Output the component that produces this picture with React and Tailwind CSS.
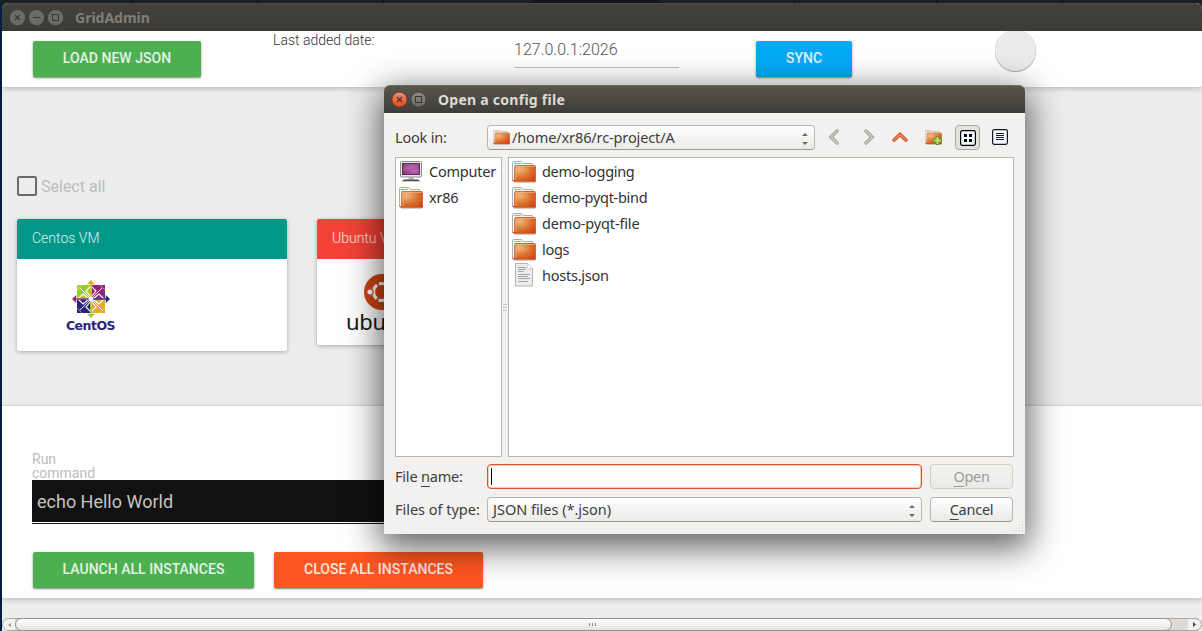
import React from "react";

const MaterialButton = ({ className, children }) => (
  <button
    className={`h-9 rounded-[2px] pb-[2px] text-center font-['Roboto'] text-[14px] font-medium tracking-[0.02px] text-white/85 shadow-[0_1px_3px_rgba(0,0,0,0.3),0_1px_1px_rgba(0,0,0,0.25)] ${className}`}
  >
    {children}
  </button>
);

const Folder = ({ small }) => (
  <svg
    viewBox="0 0 24 22"
    className={small ? "h-[15px] w-[17px] shrink-0" : "h-[22px] w-6 shrink-0"}
    preserveAspectRatio="none"
  >
    <defs>
      <radialGradient id="folderFill" cx="0.3" cy="0.25" r="0.95">
        <stop offset="0" stopColor="#f0b87c" />
        <stop offset="0.5" stopColor="#de7632" />
        <stop offset="1" stopColor="#d03c0c" />
      </radialGradient>
    </defs>
    <path d="M.5 20V1.500Q.5.5 1.500.5H9.500L11 2.500H20.500V19" fill="#f6f5f4" stroke="#b3b0ac" />
    <path d="M2 2.500h7" stroke="#eb9a66" />
    <path d="M12 4.500h8" stroke="#d8a080" />
    <path d="M3 4.500H22.500Q23.500 4.500 23.500 5.500V20.500H3L1 20Z" fill="url(#folderFill)" stroke="#c65a28" strokeWidth=".8" />
    <path d="M4 19V5.500H23" fill="none" stroke="#f1b488" strokeWidth=".7" />
    <path d="M1.500 3v16" stroke="#fff" />
    <path d="M2 21.300h21" stroke="#b8b0aa" strokeWidth=".8" />
  </svg>
);

const Computer = () => (
  <svg viewBox="0 0 24 22" className="h-[22px] w-6 shrink-0">
    <defs>
      <radialGradient id="screenFill" cx="0.65" cy="0.65" r="0.8">
        <stop offset="0" stopColor="#c967b8" />
        <stop offset="1" stopColor="#76256f" />
      </radialGradient>
    </defs>
    <rect x="1.500" y=".5" width="21" height="15.500" rx="1" fill="#e8e8e6" stroke="#8c8c88" />
    <rect x="3.500" y="2.500" width="17" height="11" fill="url(#screenFill)" stroke="#55304f" />
    <path d="M4 3h16v2L4 10z" fill="#fff" opacity=".15" />
    <path d="M9.500 16.500h5v2h-5z" fill="#aaa" />
    <path d="M5 18.500h14l2 1.500H3z" fill="#4a4a48" />
    <path d="M2.500 20.500h19" stroke="#ccc" />
  </svg>
);

const FileIcon = () => (
  <svg viewBox="0 0 24 24" className="mb-[2px] h-6 w-6 shrink-0">
    <path d="M3.500.5h12l5 5v17.500h-17z" fill="#ececea" stroke="#b2b2b0" />
    <path d="M15.500.5v5h5z" fill="#fff" stroke="#c8c8c6" strokeWidth=".7" />
    <path d="M6 4.500h8M6 6.500h8M6 8.500h6M6 11.500h12M6 13.500h10M6 15.500h12M6 18.500h10" stroke="#a4a4a2" />
  </svg>
);

const Spin = () => (
  <svg viewBox="0 0 6 12" className="ml-auto mt-[3px] h-3 w-[6px] shrink-0">
    <path d="M0 3L3 0l3 3zM0 9L3 12l3-3z" fill="#6b6b66" />
  </svg>
);

const Round = ({ kind, className = "" }) => (
  <svg viewBox="-0.5 0 16 16" className={`h-4 w-4 shrink-0 overflow-visible ${className}`}>
    <defs>
      <linearGradient id="closeFill" x2="0" y2="1">
        <stop offset="0" stopColor="#f88b6a" />
        <stop offset="1" stopColor="#df481a" />
      </linearGradient>
      <linearGradient id="maxFill" x2="0" y2="1">
        <stop offset="0" stopColor="#8f8d86" />
        <stop offset="1" stopColor="#66645d" />
      </linearGradient>
    </defs>
    <circle
      cx="8"
      cy="7.700"
      r="7.600"
      fill={kind === "closeActive" ? "url(#closeFill)" : kind === "maxActive" ? "url(#maxFill)" : "#6d6b66"}
      stroke={kind.endsWith("Active") ? "#33322e" : "none"}
      strokeWidth=".7"
    />
    {kind.startsWith("close") && <path d="M5.500 5l5 5m0-5l-5 5" stroke="#373632" strokeWidth="1.100" />}
    {kind === "min" && <path d="M4.500 7.500h7" stroke="#373632" />}
    {kind.startsWith("max") && <rect x="5" y="4.500" width="6" height="6" fill="none" stroke="#373632" />}
  </svg>
);

const Centos = () => (
  <svg viewBox="0 0 38 38" className="h-[38px] w-[38px]">
    <path d="M5 5h13.500v13.500H5z" fill="#9ccd2a" />
    <path d="M19.500 5H33v13.500H19.500z" fill="#932279" />
    <path d="M5 19.500h13.500V33H5z" fill="#262577" />
    <path d="M19.500 19.500H33V33H19.500z" fill="#efa724" />
    <path d="M8 8l22 22M30 8L8 30" stroke="#fff" strokeWidth=".9" />
    <path
      d="M19 6l-5 5 5 6 5-6zM19 32l-5-5 5-6 5 6zM6 19l5-5 6 5-6 5zM32 19l-5-5-6 5 6 5z"
      fill="none"
      stroke="#fff"
      strokeWidth="1.100"
    />
    <path d="M10 5L5 10M28 5l5 5M5 28l5 5M33 28l-5 5" stroke="#fff" strokeWidth=".5" />
    <path d="M18.200 4h1.600v14h-1.600zM15 4.200L19 0l4 4.200z" fill="#efa724" />
    <path d="M18.200 20h1.600v14h-1.600zM15 33.800L19 38l4-4.200z" fill="#9ccd2a" />
    <path d="M4 18.200h14v1.600H4zM4.200 15L0 19l4.200 4z" fill="#932279" />
    <path d="M20 18.200h14v1.600H20zM33.800 15L38 19l-4.200 4z" fill="#262577" />
    <circle cx="19" cy="19" r="2.500" fill="#fff" />
  </svg>
);

const UbuntuLogo = () => (
  <svg viewBox="0 0 36 36" className="h-9 w-9">
    <circle cx="18" cy="18" r="18" fill="#d04515" />
    <circle cx="18" cy="18" r="8.500" fill="none" stroke="#fff" strokeWidth="3.200" strokeDasharray="15.800 2" strokeDashoffset="-1" />
    <g fill="#fff" stroke="#d04515" strokeWidth="1.200">
      <circle cx="6" cy="18" r="3.200" />
      <circle cx="24" cy="7.600" r="3.200" />
      <circle cx="24" cy="28.400" r="3.200" />
    </g>
  </svg>
);

const Row = ({ icon, label, className = "" }) => (
  <li className="flex h-[26px] items-center gap-[6px] pl-[3px]">
    {icon}
    <span className={`pb-px ${className}`}>{label}</span>
  </li>
);

const CONTROL =
  "flex items-center rounded-[4px] border border-[#b9b7b2] border-b-[#999792] bg-linear-to-b from-white to-[#ebeae8]";

const Dialog = () => (
  <section className="absolute left-[384px] top-[85px] flex h-[449px] w-[641px] flex-col rounded-t-[6px] bg-[#f2f1ef] font-['Noto_Sans',sans-serif] text-[15px] text-[#3f3e3c] shadow-[0_10px_34px_4px_rgba(0,0,0,0.62)]">
    <header className="flex h-7 shrink-0 items-center rounded-t-[6px] border-t border-[#6c6b60] bg-linear-to-b from-[#58564d] to-[#3d3c38] pl-[7px] text-[14px] font-bold text-[#dfdbd2]">
      <Round kind="closeActive" />
      <Round kind="maxActive" className="ml-[3px]" />
      <span className="ml-3 pb-px tracking-[0.26px]">Open a config file</span>
    </header>
    <div className="flex flex-1 flex-col pl-[11px] pr-[11px] pt-3">
      <div className="flex h-[26px] items-center">
        <span className="w-[92px] text-[14.500px] tracking-[-0.2px]">Look in:</span>
        <div className={`${CONTROL} mb-px h-[25px] w-[328px] pl-[5px] pr-[6px]`}>
          <Folder small />
          <span className="ml-[2px] pt-px text-[14.500px] tracking-[-0.12px]">/home/xr86/rc-project/A</span>
          <Spin />
        </div>
        <svg viewBox="0 0 12 16" className="mb-[2px] ml-[13px] h-4 w-3">
          <path d="M9 2L3 8l6 6" fill="none" stroke="#9b9b98" strokeWidth="3.400" strokeLinecap="round" />
          <path d="M9 2L3 8l6 6" fill="none" stroke="#c6c6c3" strokeWidth="1.800" strokeLinecap="round" />
        </svg>
        <svg viewBox="0 0 12 16" className="mb-[2px] ml-[23px] h-4 w-3">
          <path d="M3 2l6 6-6 6" fill="none" stroke="#9b9b98" strokeWidth="3.400" strokeLinecap="round" />
          <path d="M3 2l6 6-6 6" fill="none" stroke="#c6c6c3" strokeWidth="1.800" strokeLinecap="round" />
        </svg>
        <svg viewBox="0 0 16 12" className="mb-[2px] ml-[17px] h-3 w-4">
          <path d="M2.200 9L8 3.500 13.800 9" fill="none" stroke="#d4512a" strokeWidth="3.600" strokeLinecap="round" />
          <path d="M2.200 9L8 3.500 13.800 9" fill="none" stroke="#ee8d58" strokeWidth="1.600" strokeLinecap="round" />
        </svg>
        <span className="relative mb-[2px] ml-[17px] flex h-4 w-[17px] items-center">
          <Folder small />
          <svg viewBox="0 0 9 9" className="absolute left-2 top-[7px] h-[9px] w-[9px]">
            <path d="M3 .5h3V3h2.500v3H6v2.500H3V6H.5V3H3z" fill="#b9dc72" stroke="#5c9420" />
          </svg>
        </span>
        <span className="mb-px ml-[13px] flex h-[25px] w-[25px] items-center justify-center rounded-[4px] border border-[#aaa8a4] bg-[#e3e2e0]">
          <svg viewBox="0 0 16 16" className="h-4 w-4">
            <rect x=".6" y=".6" width="14.800" height="14.800" rx="1.800" fill="#f4faff" stroke="#000" strokeWidth="1.200" />
            <path d="M4 4h3v3H4zM9 4h3v3H9zM4 9h3v3H4zM9 9h3v3H9z" />
          </svg>
        </span>
        <svg viewBox="0 0 16 16" className="mb-[2px] ml-3 h-4 w-4">
          <rect x=".6" y=".6" width="14.800" height="14.800" rx="1.800" fill="#f4faff" stroke="#111820" strokeWidth="1.200" />
          <path d="M4 4.500h8M4 6.500h8M4 8.500h8M4 10.500h8" stroke="#222" />
        </svg>
      </div>
      <div className="mt-[6px] flex h-[300px]">
        <ul className="w-[107px] border border-[#b9b6b0] bg-white pt-px text-[14.500px] text-[#33322f]">
          <Row icon={<Computer />} label="Computer" className="tracking-[-0.22px]" />
          <Row icon={<Folder />} label="xr86" className="tracking-[-0.2px]" />
        </ul>
        <div className="flex w-[6px] flex-col items-center justify-center gap-[2px]">
          <i className="h-px w-1 bg-[#c6c4c0]" />
          <i className="h-px w-1 bg-[#c6c4c0]" />
          <i className="h-px w-1 bg-[#c6c4c0]" />
        </div>
        <ul className="w-[506px] border border-[#b9b6b0] bg-white pt-px text-[14.500px] text-[#33322f]">
          <Row icon={<Folder />} label="demo-logging" className="tracking-[-0.3px]" />
          <Row icon={<Folder />} label="demo-pyqt-bind" className="tracking-[-0.3px]" />
          <Row icon={<Folder />} label="demo-pyqt-file" className="tracking-[-0.15px]" />
          <Row icon={<Folder />} label="logs" className="tracking-[-0.3px]" />
          <Row icon={<FileIcon />} label="hosts.json" className="tracking-[-0.24px]" />
        </ul>
      </div>
      <div className="mt-[7px] flex items-center text-[14.500px]">
        <label className="w-[92px] tracking-[-0.2px]">
          File <u className="underline-offset-[4px]">n</u>ame:
        </label>
        <div className="flex h-[25px] w-[435px] items-center rounded-[4px] border border-[#d9542b] bg-white pl-[3px] shadow-[inset_0_0_0_1px_#f4c9b8]">
          <i className="h-[17px] w-px bg-black" />
        </div>
        <button className="ml-2 h-[25px] w-[83px] rounded-[4px] border border-[#cfcdc9] bg-linear-to-b from-[#f4f3f2] to-[#ebeae8] leading-[23px] tracking-[-0.3px] text-[#9d9b98]">
          <u className="underline-offset-[4px]">O</u>pen
        </button>
      </div>
      <div className="mt-2 flex items-center text-[14.500px]">
        <label className="w-[92px] whitespace-nowrap tracking-[-0.02px]">Files of type:</label>
        <div className={`${CONTROL} h-[25px] w-[435px] pl-[5px] pr-[6px]`}>
          <span className="tracking-[-0.02px]">JSON files (*.json)</span>
          <Spin />
        </div>
        <button className={`${CONTROL} ml-2 h-[25px] w-[83px] justify-center tracking-[-0.25px]`}>
          <u className="underline-offset-[4px]">C</u>ancel
        </button>
      </div>
    </div>
    <svg viewBox="0 0 12 12" className="absolute bottom-[1px] right-[1px] h-3 w-3">
      <path d="M10 1h1M7 4h1M10 4h1M4 7h1M7 7h1M10 7h1M1 10h1M4 10h1M7 10h1M10 10h1" stroke="#c9c6c1" />
    </svg>
  </section>
);

export default function App() {
  return (
    <main className="relative flex h-[631px] w-[1202px] flex-col overflow-hidden bg-[#18202a] font-['Roboto',sans-serif]">
      <div className="flex h-[3px] shrink-0 gap-px bg-[#0c0f10]">
        <i className="w-[131px] bg-[#1b2123]" />
        <i className="w-[125px] bg-[#1b2123]" />
        <i className="w-[125px] bg-[#1b2123]" />
        <i className="w-[148px] bg-[#1b2123]" />
        <i className="w-[126px] bg-[#111314]" />
        <i className="w-[134px] bg-[#1b2123]" />
        <i className="w-[141px] bg-[#1b2123]" />
        <i className="w-[125px] bg-[#1b2123]" />
        <i className="flex-1 bg-[#1b2123]" />
      </div>
      <div className="flex min-h-0 flex-1 border-l-2 border-[#03203e]">
        <div className="flex w-[1200px] flex-col rounded-t-[6px] bg-[#ededed]">
          <header className="flex h-7 shrink-0 items-center rounded-t-[6px] border-t border-[#4b4a46] bg-linear-to-b from-[#42413d] to-[#3c3b37] pl-[7px] font-['Noto_Sans',sans-serif] text-[14px] font-bold text-[#817d77]">
            <Round kind="close" />
            <Round kind="min" className="ml-[3px]" />
            <Round kind="max" className="ml-[3px]" />
            <span className="ml-3 pb-px">GridAdmin</span>
          </header>

          <div className="flex h-14 shrink-0 overflow-visible rounded-b-[2px] bg-white pl-[31px] shadow-[0_2px_5px_rgba(0,0,0,0.2)]">
            <MaterialButton className="mt-[10px] w-[168px] bg-[#4caf50]">LOAD NEW JSON</MaterialButton>
            <span className="ml-[72px] w-[241px] text-[14px] font-light leading-[18px] text-[#333]">
              Last added date:
            </span>
            <div className="h-[37px] w-[165px] border-b border-[#bdbdbd] text-[16px] font-light leading-[37px] text-[#555]">
              127.0.0.1:2026
            </div>
            <MaterialButton className="ml-[77px] mt-[10px] w-24 bg-[#03a9f4]">SYNC</MaterialButton>
            <div className="ml-[143px] h-[43px] w-[43px] overflow-hidden">
              <div className="-mt-px h-[41px] w-[41px] rounded-full bg-[#ebebeb] shadow-[0_1px_1px_rgba(0,0,0,0.3),0_0_1px_rgba(0,0,0,0.25)]" />
            </div>
          </div>

          <div className="flex h-[318px] shrink-0 flex-col pl-[15px] pt-[89px]">
            <label className="flex h-5 items-center gap-[4px] text-[16px] text-[#bdbdbd]">
              <span className="h-5 w-5 rounded-[2px] border-2 border-[#6b6b6b]" />
              <span className="pt-[2px]">Select all</span>
            </label>
            <div className="mt-[23px] flex items-start gap-[30px]">
              <article className="h-[132px] w-[270px] overflow-hidden rounded-[2px] bg-white shadow-[0_1px_4px_rgba(0,0,0,0.3)]">
                <h2 className="h-10 bg-[#009688] pl-[15px] text-[14px] font-light leading-[38px] text-white/85">
                  Centos VM
                </h2>
                <div className="flex w-[147px] flex-col items-center pt-[21px]">
                  <Centos />
                  <span className="mt-px font-['DejaVu_Sans',sans-serif] text-[12.500px] font-bold leading-[14px] tracking-[-0.5px] text-[#262577]">
                    CentOS
                  </span>
                </div>
              </article>
              <article className="h-[126px] w-[270px] overflow-hidden rounded-[2px] bg-white shadow-[0_1px_4px_rgba(0,0,0,0.3)]">
                <h2 className="h-10 bg-[#f44336] pl-[15px] text-[14px] font-light leading-[38px] text-white/85">
                  Ubuntu VM
                </h2>
                <div className="flex flex-col items-start pl-[29px] pt-[15px]">
                  <div className="pl-[18px]">
                    <UbuntuLogo />
                  </div>
                  <span className="font-['Noto_Sans',sans-serif] text-[22px] leading-[22px] tracking-[-0.3px] text-[#161616]">
                    ubuntu
                  </span>
                </div>
              </article>
            </div>
          </div>

          <div className="flex h-[193px] shrink-0 flex-col rounded-b-[2px] border-t border-[#d6d6d6] bg-white pl-[30px] shadow-[0_2px_5px_rgba(0,0,0,0.2)]">
            <label className="mt-[46px] w-16 text-[14px] leading-[14px] text-[#bdbdbd]">Run command</label>
            <div className="h-11 w-[900px] border-b border-[#111] bg-[#111] text-[18px] text-[#c4c4c4]">
              <div className="h-[43px] border-b border-white pl-[5px] leading-[43px]">echo Hello World</div>
            </div>
            <div className="mt-7 flex gap-5 pl-px">
              <MaterialButton className="w-[221px] bg-[#4caf50]">LAUNCH ALL INSTANCES</MaterialButton>
              <MaterialButton className="w-[209px] bg-[#ff5722]">CLOSE ALL INSTANCES</MaterialButton>
            </div>
          </div>

          <div className="mt-auto flex h-[13px] shrink-0 rounded-[7px] border border-[#aaa6a0] bg-[#dddad6]">
            <div className="flex w-3 items-center justify-center rounded-l-[7px] bg-[#f3f2f0]">
              <svg viewBox="0 0 3 4" className="h-1 w-[3px]">
                <path d="M3 0v4L0 2z" fill="#999" />
              </svg>
            </div>
            <div className="-my-px flex w-[1157px] items-center justify-center gap-[2px] rounded-[7px] border border-[#96928d] bg-linear-to-b from-white to-[#e5e3e1] pr-[2px]">
              <i className="h-[3px] w-px bg-[#888]" />
              <i className="h-[3px] w-px bg-[#888]" />
              <i className="h-[3px] w-px bg-[#888]" />
            </div>
            <div className="-my-px ml-auto flex w-[13px] items-center justify-center rounded-r-[7px] border-y border-[#aaa6a0] bg-[#f3f2f0]">
              <svg viewBox="0 0 3 5" className="h-[5px] w-[3px]">
                <path d="M0 0v5l3-2.500z" fill="#444" />
              </svg>
            </div>
          </div>
        </div>
      </div>
      <Dialog />
    </main>
  );
}
